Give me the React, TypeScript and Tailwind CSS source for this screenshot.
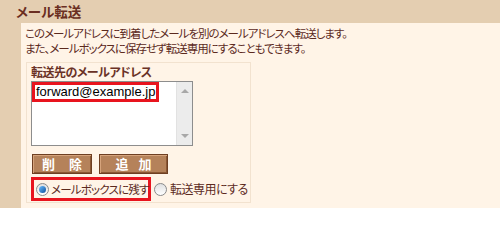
import React from "react";

const jp = { fontFamily: '"MS PGothic", "Noto Sans CJK JP", sans-serif' };

function Radio({ checked }: { checked?: boolean }) {
    return (
        <span className="w-[13px] h-[13px] rounded-full border border-[#8a8a8a] bg-gradient-to-b from-[#e0e0e0] to-[#ffffff] flex items-center justify-center shrink-0">
            {checked && <span className="w-[7px] h-[7px] rounded-full bg-gradient-to-br from-[#6cc0ff] to-[#0b4f9c]" />}
        </span>
    );
}

function BrownButton({ chars, width, gap }: { chars: string[]; width: string; gap: string }) {
    return (
        <button
            className={`${width} ${gap} h-[20px] bg-[#b5825a] border border-[#6e3f22] shadow-[inset_1px_1px_0_#d6a47c,inset_-1px_-1px_0_#8a5734] text-white text-[13px] font-bold leading-[16px] flex items-center justify-center whitespace-nowrap`}
        >
            {chars.map((c) => (
                <span key={c}>{c}</span>
            ))}
        </button>
    );
}

export default function App() {
    return (
        <div className="w-[500px] h-[208px] bg-[#e4ceb1] overflow-hidden text-[#5c2a1e]" style={jp}>
            <div className="h-[23px] pl-[16px] pt-[3px] text-[13.5px] font-bold leading-[16px] text-[#6a2e22] [font-feature-settings:'palt']">
                メール転送
            </div>
            <div className="ml-[21px] h-[185px] bg-[#fff4e7] pt-[3px] pl-[4px]">
                <p className="text-[11.5px] leading-[15px] [font-feature-settings:'palt'] tracking-[-1px] whitespace-nowrap">
                    このメールアドレスに到着したメールを別のメールアドレスへ転送します。
                    <br />
                    また、メールボックスに保存せず転送専用にすることもできます。
                </p>
                <div className="mt-[6px] ml-[1px] w-[225px] h-[141px] border border-[#f2e2cf] pl-[4px] pt-[1px]">
                    <div className="text-[12px] font-bold leading-[16px] tracking-[-0.5px] text-[#6a3226] [font-feature-settings:'palt']">
                        転送先のメールアドレス
                    </div>
                    <div className="mt-[1px] w-[162px] h-[65px] border border-[#8d8d8d] bg-white flex">
                        <div className="flex-1">
                            <div
                                className="w-[127px] h-[20px] border-[3px] border-[#e8141e] text-[13px] leading-[14px] text-black pl-[1px] whitespace-nowrap"
                                style={{ fontFamily: '"Liberation Sans", Arial, sans-serif' }}
                            >
                                forward@example.jp
                            </div>
                        </div>
                        <div className="w-[16px] bg-[#ececec] border-l border-[#e2e2e2] flex flex-col items-center justify-between py-[6px]">
                            <svg width="8" height="5" viewBox="0 0 8 5">
                                <path d="M0 5 L4 1 L8 5 Z" fill="#a8a8a8" />
                            </svg>
                            <svg width="8" height="5" viewBox="0 0 8 5">
                                <path d="M0 0 L4 4 L8 0 Z" fill="#a8a8a8" />
                            </svg>
                        </div>
                    </div>
                    <div className="mt-[8px] flex gap-[7px] ml-[1px]">
                        <BrownButton chars={["削", "除"]} width="w-[60px]" gap="gap-[14px]" />
                        <BrownButton chars={["追", "加"]} width="w-[69px]" gap="gap-[10px]" />
                    </div>
                    <div className="mt-[3px] flex items-center">
                        <div className="w-[120px] h-[24px] border-[3px] border-[#e8141e] flex items-center pl-[2px] gap-[2px]">
                            <Radio checked />
                            <span className="text-[11.5px] leading-[16px] tracking-[-0.8px] [font-feature-settings:'palt'] whitespace-nowrap">
                                メールボックスに残す
                            </span>
                        </div>
                        <div className="flex items-center ml-[3px] gap-[3px]">
                            <Radio />
                            <span className="text-[12px] leading-[16px] tracking-[-0.5px] [font-feature-settings:'palt'] whitespace-nowrap">
                                転送専用にする
                            </span>
                        </div>
                    </div>
                </div>
            </div>
        </div>
    );
}
